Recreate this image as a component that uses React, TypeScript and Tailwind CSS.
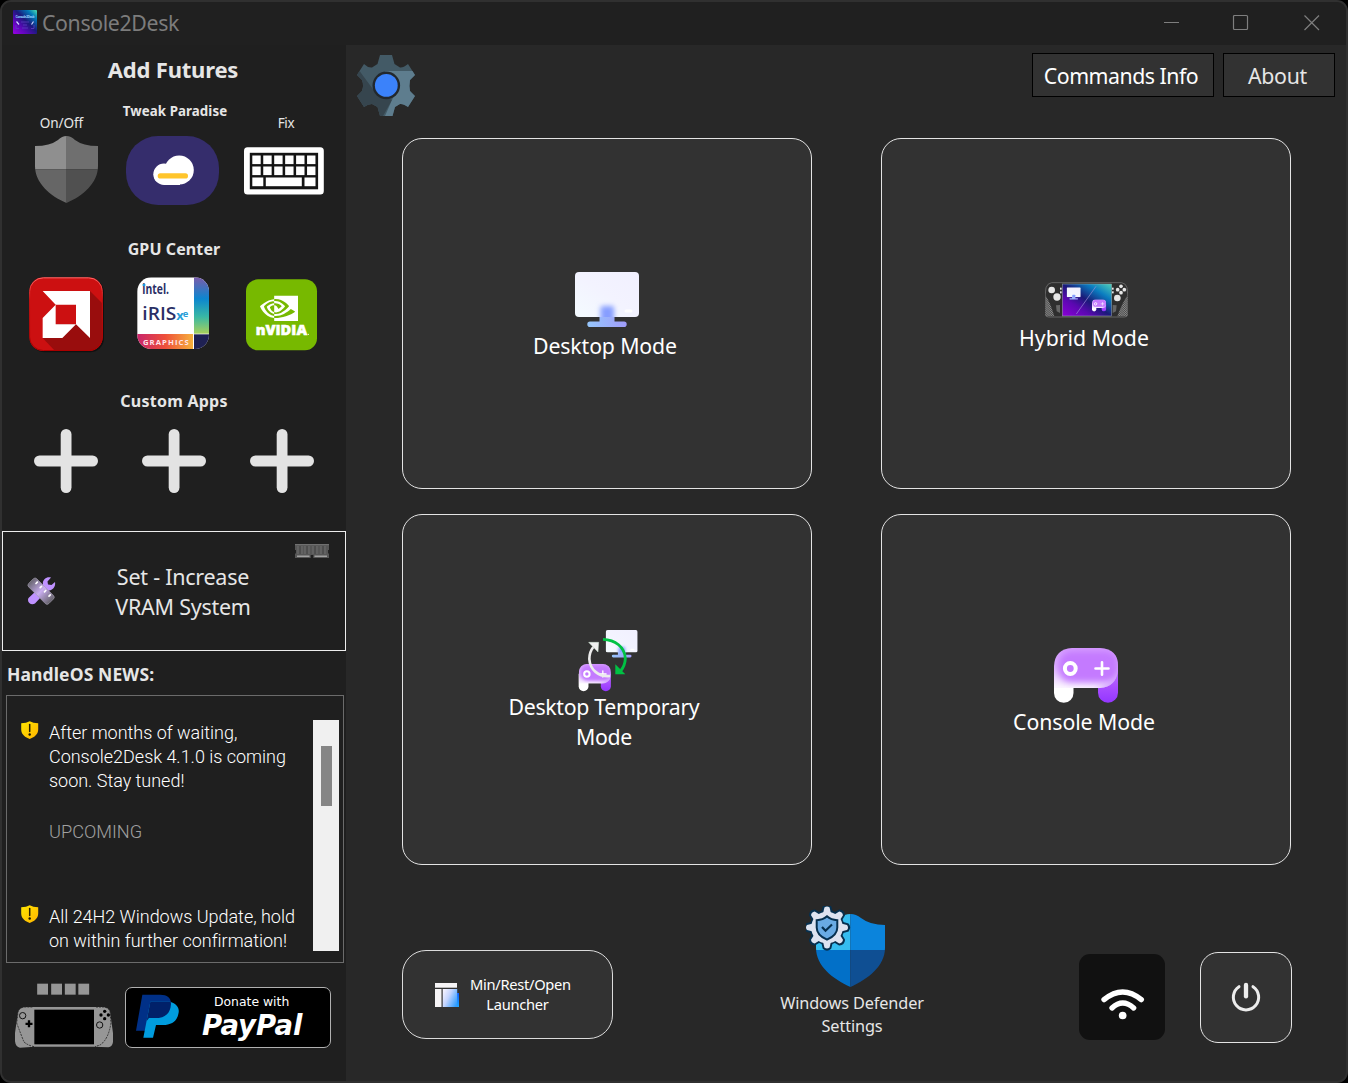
import React from "react";
import { SiNvidia } from "react-icons/si";

const FONT = "font-['Noto_Sans','Liberation_Sans',sans-serif]";

function AppLogo() {
  return (
    <svg width="24" height="24" viewBox="0 0 24 24">
      <defs>
        <linearGradient id="logoG" x1="0" y1="1" x2="1" y2="0">
          <stop offset="0" stopColor="#9a00e6" />
          <stop offset="0.3" stopColor="#5a08b8" />
          <stop offset="0.55" stopColor="#1b1a7c" />
          <stop offset="0.8" stopColor="#0078b8" />
          <stop offset="1" stopColor="#4fe0b0" />
        </linearGradient>
      </defs>
      <rect width="24" height="24" rx="1" fill="url(#logoG)" />
      <text x="2.5" y="7.6" fontSize="3.4" fontWeight="700" fill="#8fd0ff" textLength="19" fontFamily="Noto Sans">Console2Desk</text>
      <path d="M3.500 11.500l2.500 3M18.500 14.500l2-3" stroke="#cfd3ff" strokeWidth="1.200" />
      <path d="M3 15v3.5h3M21 15v3.5h-3M8 12h8M10 15h4M9 18h6" stroke="#5a3fc0" strokeWidth="0.8" fill="none" />
    </svg>
  );
}

function Gear() {
  return (
    <svg width="58" height="61" viewBox="0 0 58 61">
      <defs>
        <clipPath id="gearC">
          <path d="M23 0H35L37.5 9L43 12.5Q46 13 51 9L58 20L53 25Q52 30.500 53 36L58 41L51 52Q46 48.500 43 49L38 52L35.500 61H23L20.500 52L15 49Q11 49 7 52L0 41L5 36Q7 30.500 5 25L0 20L7 9Q11 13 15 12.500L20.500 9Z" />
        </clipPath>
      </defs>
      <g clipPath="url(#gearC)">
        <rect width="58" height="61" fill="#435a66" />
        <path d="M0 12L4 18L18 37L35 45L26 61H0Z" fill="#36454e" />
        <path d="M28 16H58V61H28L39 36Z" fill="#5e7d8e" />
      </g>
      <circle cx="29.300" cy="30.400" r="13.800" fill="#22282d" />
      <circle cx="29.300" cy="30.400" r="11.400" fill="#3b82fa" />
    </svg>
  );
}

function GreyShield() {
  return (
    <svg width="63" height="67" viewBox="0 0 63 67">
      <defs>
        <clipPath id="gs">
          <path d="M31.500 0Q36 0 40 4Q48 10 63 10V30C63 47 48 60 31.500 67C15 60 0 47 0 30V10Q15 10 23 4Q27 0 31.500 0Z" />
        </clipPath>
      </defs>
      <g clipPath="url(#gs)">
        <rect width="31" height="33.300" fill="#8f8f8f" />
        <rect x="31" width="32" height="33.300" fill="#6f6f6f" />
        <rect y="33.300" width="31" height="34" fill="#666" />
        <rect x="31" y="33.300" width="32" height="34" fill="#505050" />
      </g>
    </svg>
  );
}

function CloudPill() {
  return (
    <svg width="93" height="69" viewBox="0 0 93 69">
      <rect width="93" height="69" rx="32" fill="#352d6c" />
      <circle cx="53.200" cy="34" r="14.600" fill="#fff" />
      <circle cx="38" cy="38.300" r="10.700" fill="#fff" />
      <rect x="38" y="33" width="16" height="16" fill="#fff" />
      <rect x="31.700" y="37.300" width="30.300" height="5.200" rx="2.600" fill="#ffc52c" />
    </svg>
  );
}

function KeyboardIcon() {
  return (
    <svg width="81" height="48" viewBox="0 0 81 48">
      <rect x="0" y="0.300" width="79.800" height="47.200" rx="3.500" fill="#fff" />
      <rect x="5.800" y="5.800" width="68.300" height="36.500" fill="#141414" />
      {[8.5, 19.5].map((y) =>
        [0, 1, 2, 3, 4, 5].map((i) => (
          <rect key={`${y}-${i}`} x={8.3 + i * 10.95} y={y} width="8.400" height="8.600" fill="#fff" />
        ))
      )}
      <rect x="8.300" y="30.500" width="11" height="8.700" fill="#fff" />
      <rect x="21.800" y="30.500" width="36" height="8.700" fill="#fff" />
      <rect x="60.500" y="30.500" width="11" height="8.700" fill="#fff" />
    </svg>
  );
}

function AmdIcon() {
  return (
    <svg width="76" height="76" viewBox="87 142 228 228">
      <defs>
        <clipPath id="amdC"><rect x="88" y="143" width="220" height="221" rx="42" /></clipPath>
        <linearGradient id="amdG" x1="0" y1="0" x2="0" y2="1">
          <stop offset="0" stopColor="#ff6a6a" />
          <stop offset="0.300" stopColor="#cc1010" />
          <stop offset="1" stopColor="#a00" />
        </linearGradient>
      </defs>
      <rect x="92" y="147" width="220" height="221" rx="42" fill="#111" />
      <g clipPath="url(#amdC)">
        <rect x="88" y="143" width="220" height="221" fill="#cc1011" />
        <path d="M270 184L310 224V366H167L128 325L228 225Z" fill="#990d0d" />
        <path d="M167 225H228V284H167Z" fill="#cc1011" />
      </g>
      <rect x="89" y="144.500" width="218" height="218" rx="41" fill="none" stroke="url(#amdG)" strokeWidth="3" />
      <path d="M128 184H270V325L228 284V225H167Z" fill="#fff" />
      <path d="M167 225V284H228L187 325H128V265Z" fill="#fff" />
    </svg>
  );
}

function IntelIcon() {
  return (
    <svg width="72" height="72" viewBox="412 140 216 216">
      <defs>
        <clipPath id="inC"><rect x="413" y="141" width="215" height="215" rx="42" /></clipPath>
        <linearGradient id="inS" x1="0" y1="0" x2="0" y2="1">
          <stop offset="0" stopColor="#7a5cab" />
          <stop offset="0.380" stopColor="#0c86cf" />
          <stop offset="0.700" stopColor="#39b8a4" />
          <stop offset="1" stopColor="#a8d05a" />
        </linearGradient>
        <linearGradient id="inB">
          <stop offset="0" stopColor="#c8256c" />
          <stop offset="0.500" stopColor="#ee4f3a" />
          <stop offset="1" stopColor="#f6b03c" />
        </linearGradient>
      </defs>
      <g clipPath="url(#inC)">
        <rect x="412" y="141" width="216" height="216" fill="#fff" />
        <rect x="583" y="141" width="46" height="169" fill="url(#inS)" />
        <rect x="412" y="311" width="168" height="47" fill="url(#inB)" />
        <rect x="583" y="312" width="46" height="46" fill="#1f2153" />
      </g>
      <g fontFamily="Open Sans, Noto Sans, sans-serif" fill="#2b2f66">
        <text x="428" y="191" fontSize="41" fontWeight="700" textLength="80" lengthAdjust="spacingAndGlyphs">intel.</text>
        <text x="428" y="269" fontSize="55" fontWeight="600" textLength="102" lengthAdjust="spacingAndGlyphs">iRIS</text>
        <text x="530" y="270" fontSize="39" fontWeight="700" fill="#2a9fd8">x</text>
        <text x="549" y="261" fontSize="28" fontWeight="700" fill="#2a9fd8">e</text>
        <text x="430" y="345" fontSize="23" fontWeight="700" fill="#ffe3ea" textLength="137">GRAPHICS</text>
      </g>
      <rect x="429" y="161" width="8" height="6" fill="#1a9be0" />
    </svg>
  );
}

function NvidiaIcon() {
  return (
    <svg width="72" height="72" viewBox="738 148 216 216">
      <rect x="738" y="149" width="213" height="213" rx="36" fill="#77b900" />
      <SiNvidia x="780" y="179" width="114" height="114" size={114} color="#fff" />
      <text x="767" y="316" fontFamily="Open Sans, Noto Sans, sans-serif" fontWeight="800" fontSize="41" fill="#fff" stroke="#fff" strokeWidth="1.500" textLength="154" lengthAdjust="spacingAndGlyphs">nVIDIA</text>
      <circle cx="925" cy="314" r="2" fill="#fff" />
    </svg>
  );
}

function Plus() {
  return (
    <svg width="64" height="64" viewBox="0 0 64 64">
      <rect x="26.700" width="10.800" height="64" rx="5.400" fill="#e3e3e3" />
      <rect y="26.500" width="64" height="11" rx="5.500" fill="#e3e3e3" />
    </svg>
  );
}

function ToolsIcon() {
  return (
    <svg width="29" height="30" viewBox="0 0 29 30">
      <defs>
        <linearGradient id="tlG">
          <stop offset="0" stopColor="#6a6772" />
          <stop offset="0.500" stopColor="#c9aef0" />
          <stop offset="1" stopColor="#66636c" />
        </linearGradient>
      </defs>
      <path d="M1.500 22L16 8.500C15 4 19.500 0 24 1.500L20.500 5.500L21 8.500L24.500 9L28 6C29 11 25 15.500 20 14.500L8 27.600C4 30 -0.500 26 1.500 22Z" fill="#bf92ff" />
      <rect x="0" y="9.500" width="28.500" height="11.500" rx="2.500" transform="rotate(45 14.250 15)" fill="url(#tlG)" stroke="#a59fb0" strokeWidth="0.600" />
      <path d="M9 7.500l1.300-1.300M13.200 11.700l1.300-1.300M17.500 15.800l1.300-1.300M22 20.200l1.300-1.300" stroke="#fff" strokeWidth="1.700" strokeLinecap="round" />
    </svg>
  );
}

function RamIcon() {
  return (
    <svg width="34" height="14" viewBox="0 0 34 14">
      <rect width="34" height="14" fill="#565656" />
      <rect width="34" height="1.200" fill="#707070" />
      <path d="M3 2v8M7 2v8M10 2v8M14 2v8M18 2v8M22 2v8M26 2v8M30 2v8" stroke="#757575" strokeWidth="0.800" />
      <path d="M5 2v8M12 2v8M20 2v8M28 2v8" stroke="#454545" strokeWidth="0.800" />
      <path d="M2 12.200h12.500M19.500 12.200h12.500" stroke="#a0a0a0" strokeWidth="1.600" />
      <rect x="15.700" y="11" width="2.600" height="3" fill="#1f1f1f" />
      <rect y="6" width="1" height="3.500" fill="#222" />
      <rect x="33" y="6" width="1" height="3.500" fill="#222" />
    </svg>
  );
}

function WarnShield() {
  return (
    <svg width="18" height="18" viewBox="0 0 18 18">
      <defs>
        <linearGradient id="wsG" x1="0" y1="0" x2="1" y2="1">
          <stop offset="0" stopColor="#ffe600" />
          <stop offset="1" stopColor="#ffb300" />
        </linearGradient>
      </defs>
      <path d="M8.700 0.300Q12 2.300 17.200 2.300V8.500C17.200 13.500 13 16.500 8.700 17.900C4.500 16.500 0.200 13.500 0.200 8.500V2.300Q5.500 2.300 8.700 0.300Z" fill="url(#wsG)" />
      <path d="M8.700 3.500v7" stroke="#2a2000" strokeWidth="1.500" strokeLinecap="round" />
      <circle cx="8.700" cy="13.500" r="1.200" fill="#1a1400" />
    </svg>
  );
}

function HandheldGrey() {
  return (
    <svg width="98" height="66" viewBox="45 55 294 198">
      {[111.5, 153.5, 194.5, 235].map((x) => (
        <rect key={x} x={x} y="57" width="32.500" height="33" fill="#969696" />
      ))}
      <path d="M75 127H310Q325 128 330 140L339 205V232Q337 247 325 248L282 246H104L60 249Q47 247 45 230V205L54 142Q58 128 75 127Z" fill="#969696" />
      <rect x="103" y="135" width="179" height="104" fill="#000" />
      <path d="M97 127H75Q58 128 54 142L50 175Q65 215 72 232Q85 243 103 246M288 127H310Q325 128 330 140L333 175Q325 225 300 241L285 246" fill="none" stroke="#222" strokeWidth="2.500" strokeDasharray="6 3" />
      <circle cx="68" cy="153" r="9.500" fill="none" stroke="#111" strokeWidth="3" />
      <circle cx="299" cy="181" r="9.500" fill="none" stroke="#111" strokeWidth="3" />
      <path d="M87 167v21M76.500 177.500h21" stroke="#000" strokeWidth="7" />
      <g fill="#000">
        <circle cx="314" cy="140" r="5" /><circle cx="314" cy="162" r="5" /><circle cx="303" cy="151" r="5" /><circle cx="325" cy="151" r="5" />
      </g>
    </svg>
  );
}

function PayPalMark() {
  return (
    <svg width="43" height="44" viewBox="409 88 129 132">
      <path d="M428 90H482C503 90 515 101 514 118C512 147 496 160 470 160H448L440 198H409Z" fill="#003087" />
      <path d="M452 111H511C532 117 541 131 536 148C531 172 513 181 490 181H469L460 219H431Z" fill="#009cde" />
      <path d="M452 111H513Q514 114 514 118C512 147 496 160 470 160H448L441 169Z" fill="#012169" />
    </svg>
  );
}

function MonitorShape({ id }: { id: string }) {
  return (
    <g>
      <defs>
        <linearGradient id={`${id}a`} x1="0" y1="1" x2="1" y2="0">
          <stop offset="0" stopColor="#f4fbff" />
          <stop offset="0.500" stopColor="#f3f3ff" />
          <stop offset="1" stopColor="#f1f0ff" />
        </linearGradient>
        <linearGradient id={`${id}b`}>
          <stop offset="0" stopColor="#96c6fb" />
          <stop offset="1" stopColor="#a09cfa" />
        </linearGradient>
        <filter id={`${id}c`} x="-60%" y="-60%" width="220%" height="220%">
          <feGaussianBlur stdDeviation="2.800" />
        </filter>
        <clipPath id={`${id}d`}><rect width="64" height="45" rx="4" /></clipPath>
      </defs>
      <path d="M24.500 43H39.500V49.500H49Q51.700 49.500 51.700 52.200Q51.700 55 49 55H15Q12.300 55 12.300 52.200Q12.300 49.500 15 49.500H24.500Z" fill={`url(#${id}b)`} />
      <g clipPath={`url(#${id}d)`}>
        <rect width="64" height="45" fill={`url(#${id}a)`} />
        <rect x="25.500" y="34" width="13.500" height="20" rx="2" fill="#869eff" filter={`url(#${id}c)`} />
      </g>
      <rect x="49.500" y="37.500" width="8" height="3" rx="1.500" fill="#fff" />
    </g>
  );
}

function PadShape({ id }: { id: string }) {
  return (
    <g>
      <defs>
        <linearGradient id={`${id}a`} x1="0" y1="0" x2="0" y2="1">
          <stop offset="0" stopColor="#bb7bff" />
          <stop offset="0.500" stopColor="#ac50ff" />
          <stop offset="1" stopColor="#9336ff" />
        </linearGradient>
        <linearGradient id={`${id}b`} x1="0.400" y1="0" x2="0.250" y2="1">
          <stop offset="0" stopColor="#d69cff" />
          <stop offset="0.500" stopColor="#dcb0ff" />
          <stop offset="1" stopColor="#fbf5ff" />
        </linearGradient>
        <filter id={`${id}c`} x="-30%" y="-30%" width="160%" height="160%">
          <feGaussianBlur stdDeviation="3" />
        </filter>
        <clipPath id={`${id}d`}>
          <path d="M18 0H46Q64 1 64 18V22Q62 39 46 40H0V18Q1 1 18 0Z" />
        </clipPath>
      </defs>
      <path d="M0 20H19.500V45A9.700 9.700 0 0 1 0 45Z" fill="#fff" />
      <path d="M44 20H64V44.700A10 10 0 0 1 44 44.700Z" fill={`url(#${id}a)`} />
      <g clipPath={`url(#${id}d)`}>
        <rect width="64" height="40" fill={`url(#${id}b)`} />
        <rect x="4.500" y="3" width="60" height="31" rx="13" fill="#c47aff" filter={`url(#${id}c)`} />
        <path d="M44 42H66V24Q62 36 44 40Z" fill="#c88cff" filter={`url(#${id}c)`} />
      </g>
      <circle cx="16.300" cy="20.500" r="5.400" fill="none" stroke="#fff" strokeWidth="4" />
      <path d="M48 14.300V26.700M41.500 20.500H54.500" stroke="#fff" strokeWidth="2.600" strokeLinecap="round" />
    </g>
  );
}

function HandheldColor() {
  return (
    <svg width="83" height="36" viewBox="135 65 249 108">
      <defs>
        <linearGradient id="hhG" x1="0" y1="1" x2="1" y2="0">
          <stop offset="0" stopColor="#8c00d8" />
          <stop offset="0.300" stopColor="#5a08b0" />
          <stop offset="0.500" stopColor="#1a1a78" />
          <stop offset="0.750" stopColor="#0a7cc0" />
          <stop offset="1" stopColor="#4fd0b8" />
        </linearGradient>
        <pattern id="hhP" width="4" height="4" patternUnits="userSpaceOnUse" patternTransform="rotate(40)">
          <rect width="4" height="4" fill="#4a4a4a" />
          <rect width="2" height="4" fill="#8a8a8a" />
        </pattern>
      </defs>
      <path d="M155 67H365Q378 69 381 82L384 110V160Q383 170 374 170H145Q136 170 135 160V110L138 82Q142 69 155 67Z" fill="#2e2e2e" stroke="#6f6f6f" strokeWidth="2.500" />
      <path d="M136 105Q150 125 163 168H146Q137 168 136 160ZM383 105Q368 125 352 168H373Q383 168 383 160Z" fill="url(#hhP)" />
      <rect x="187" y="71" width="148" height="96" fill="url(#hhG)" stroke="#9aa" strokeWidth="1.500" />
      <path d="M288 78L229 161" stroke="#9b8fd8" strokeWidth="2" />
      <g fill="#e6e6e6">
        <circle cx="155" cy="89" r="10" /><circle cx="171" cy="110" r="11" /><circle cx="352" cy="113" r="10" />
        <circle cx="363" cy="78" r="5.500" /><circle cx="363" cy="97" r="5.500" /><circle cx="353" cy="88" r="5.500" /><circle cx="373" cy="88" r="5.500" />
        <rect x="180" y="82" width="5" height="6" /><rect x="180" y="93" width="5" height="6" />
        <rect x="336" y="82" width="5" height="6" /><rect x="336" y="93" width="5" height="6" />
      </g>
      <path d="M168 135L180 134V158L170 153ZM350 135L338 134V158L348 153Z" fill="#666" />
      <g transform="translate(200 81) scale(0.660)"><MonitorShape id="hm" /></g>
      <g transform="translate(276 117) scale(0.660)"><PadShape id="hp" /></g>
    </svg>
  );
}

function SwapIcon() {
  return (
    <svg width="61" height="63" viewBox="264 58 183 189">
      <g transform="translate(347 61) scale(1.500)"><MonitorShape id="sm" /></g>
      <g transform="translate(266 162) scale(1.510)"><PadShape id="sp" /></g>
      <path d="M360 199C325 202 300 180 298 148Q298 127 310 112" fill="none" stroke="#ececec" strokeWidth="8" />
      <path d="M296 98L326 98L324 127Z" fill="#f0f0f0" stroke="#cfe6d4" strokeWidth="1.500" />
      <path d="M339 89C375 90 405 112 406 147Q405 168 392 184" fill="none" stroke="#00c244" strokeWidth="8.500" />
      <path d="M376 164L376 194L406 194Z" fill="#00c244" />
    </svg>
  );
}

function LauncherIcon() {
  return (
    <svg width="24" height="24" viewBox="0 0 24 24">
      <defs>
        <linearGradient id="laG" x1="0" y1="0.200" x2="1" y2="0.800">
          <stop offset="0" stopColor="#f3f1ff" />
          <stop offset="0.400" stopColor="#c5d5ff" />
          <stop offset="1" stopColor="#2f9dff" />
        </linearGradient>
        <linearGradient id="laH" x1="0" y1="0" x2="0" y2="1">
          <stop offset="0" stopColor="#0a5cff" />
          <stop offset="1" stopColor="#1fa8ff" />
        </linearGradient>
      </defs>
      <rect x="14" y="10" width="10" height="14" fill="url(#laH)" />
      <rect width="22" height="4.700" fill="#f6f4f6" />
      <rect y="6" width="6.500" height="18" fill="#f6f4f6" />
      <rect x="7.700" y="6" width="14.500" height="18" fill="url(#laG)" />
    </svg>
  );
}

function DefenderIcon() {
  const teeth = [0, 45, 90, 135, 180, 225, 270, 315];
  return (
    <svg width="80" height="81" viewBox="0 0 80 81">
      <defs>
        <clipPath id="dfC">
          <path d="M44.500 8Q50 8 55 12Q64 19 79 19V42C79 60 62 73 44.500 81C27 73 10 60 10 42V19Q25 19 34 12Q38 8 44.500 8Z" />
        </clipPath>
      </defs>
      <g clipPath="url(#dfC)">
        <rect width="44.300" height="44" fill="#35bdf0" />
        <rect x="44.300" width="36" height="44" fill="#0b84dc" />
        <rect y="44" width="44.300" height="38" fill="#0270c8" />
        <rect x="44.300" y="44" width="36" height="38" fill="#0f4f93" />
      </g>
      <g transform="translate(21 21.500)">
        {teeth.map((a) => (
          <path key={a} transform={`rotate(${a})`} d="M-4.600 -14L-3 -20.500Q0 -23 3 -20.500L4.600 -14Z" fill="#dde3f0" stroke="#06304f" strokeWidth="2.800" strokeLinejoin="round" />
        ))}
        <circle r="16.600" fill="#dde3f0" stroke="#06304f" strokeWidth="1.600" />
        {teeth.map((a) => (
          <path key={a} transform={`rotate(${a})`} d="M-4.200 -13L-2.600 -20Q0 -22 2.600 -20L4.200 -13Z" fill="#dde3f0" />
        ))}
        <path d="M0 -11.200Q4 -7.500 10.300 -7.300V0C10.300 6 5 10 0 12.200C-5 10 -10.300 6 -10.300 0V-7.300Q-4 -7.500 0 -11.200Z" fill="#69abe4" stroke="#06304f" strokeWidth="2" />
        <path d="M-5 -0.500L-1.500 3.200L5 -3" fill="none" stroke="#06304f" strokeWidth="2.200" />
      </g>
    </svg>
  );
}

function WifiIcon() {
  return (
    <svg width="44" height="32" viewBox="122 174 132 96">
      <path d="M131 209Q187 163 243 209" fill="none" stroke="#fff" strokeWidth="16" strokeLinecap="round" />
      <path d="M155 234Q187 204 220 234" fill="none" stroke="#fff" strokeWidth="16" strokeLinecap="round" />
      <circle cx="187" cy="256.500" r="11.500" fill="#fff" />
    </svg>
  );
}

function PowerIcon() {
  return (
    <svg width="30" height="30" viewBox="513 156 90 90">
      <path d="M537 170A38 38 0 1 0 579 170" fill="none" stroke="#ececec" strokeWidth="9" strokeLinecap="round" />
      <path d="M558 165V199" stroke="#ececec" strokeWidth="13" strokeLinecap="round" />
    </svg>
  );
}

function IconRow({ items, className }: { items: React.ReactNode[]; className: string }) {
  return (
    <div className={`grid grid-cols-3 w-[324px] ml-[10px] ${className}`}>
      {items.map((it, i) => (
        <button key={i} className="flex items-start justify-center">{it}</button>
      ))}
    </div>
  );
}

function ModeCard({ icon, pad, children }: { icon: React.ReactNode; pad: string; children: React.ReactNode }) {
  return (
    <button className={`flex flex-col items-center justify-start rounded-[20px] border border-[#e4e4e4] bg-[#323232] text-white text-[21.300px] leading-[30px] ${pad}`}>
      {icon}
      {children}
    </button>
  );
}

function NewsItem({ children }: { children: React.ReactNode }) {
  return (
    <div className="flex">
      <div className="w-[28px] shrink-0"><WarnShield /></div>
      <p className="font-['Roboto',sans-serif] font-light text-[18px] leading-6 tracking-[-0.020px] text-white whitespace-nowrap">{children}</p>
    </div>
  );
}

function Sidebar() {
  return (
    <aside className="w-[344px] shrink-0 bg-[#1f1f1f] flex flex-col text-[#e6e6e6]">
      <h1 className="h-[30px] mt-[9px] text-center font-bold text-[22px] leading-[30px] tracking-[-0.200px] -ml-[2px]">Add Futures</h1>
      <div className="grid grid-cols-3 w-[324px] ml-[10px] mt-[17px] h-[35px] text-center whitespace-nowrap">
        <span className="mt-[12px] text-[13.600px] leading-5 tracking-[-0.120px] -ml-[9px]">On/Off</span>
        <span className="text-[13.300px] leading-5 font-bold tracking-[0.080px] ml-[2px]">Tweak Paradise</span>
        <span className="mt-[12px] text-[13.500px] leading-5 tracking-[-0.300px] ml-[8px]">Fix</span>
      </div>
      <IconRow className="h-[69px]" items={[<GreyShield />, <span className="-ml-[3px]"><CloudPill /></span>, <span className="mt-[11px] ml-[4px]"><KeyboardIcon /></span>]} />
      <h2 className="mt-[32px] h-6 text-center font-bold text-base leading-6 tracking-[0.100px]">GPU Center</h2>
      <IconRow className="mt-[16px] h-[76px]" items={[<span className="ml-[2px]"><AmdIcon /></span>, <span className="-ml-[2px]"><IntelIcon /></span>, <span className="mt-[2px]"><NvidiaIcon /></span>]} />
      <h2 className="mt-[36px] h-6 text-center font-bold text-base leading-6 tracking-[0.250px]">Custom Apps</h2>
      <IconRow className="mt-[16px] h-[64px]" items={[<Plus />, <Plus />, <Plus />]} />
      <button className="relative mt-[38px] h-[120px] shrink-0 border border-[#ededed] flex items-center text-[21.500px] leading-[30px]">
        <span className="ml-[24px]"><ToolsIcon /></span>
        <span className="flex-1 pr-[35px] mt-[2px] text-center tracking-[-0.250px]">Set - Increase<br />VRAM System</span>
        <span className="absolute right-[16px] top-[12px]"><RamIcon /></span>
      </button>
      <h2 className="mt-[11px] h-6 pl-[5px] font-bold text-[17.500px] leading-6 tracking-[0.120px]">HandleOS NEWS:</h2>
      <section className="mt-[9px] ml-[4px] mr-[2px] h-[268px] border border-[#6b6b6b] pt-[24px] pl-[14px] pr-[4px] flex justify-between">
        <div className="pt-[1px]">
          <NewsItem>After months of waiting,<br />Console2Desk 4.1.0 is coming<br />soon. Stay tuned!</NewsItem>
          <p className="ml-[28px] mt-[27px] mb-[61px] font-['Roboto',sans-serif] font-light text-[18.200px] leading-6 text-[#a0a0a0]">UPCOMING</p>
          <NewsItem>All 24H2 Windows Update, hold<br />on within further confirmation!</NewsItem>
        </div>
        <div className="w-[26px] h-[231px] bg-[#f0f0f0] pt-[26px] pl-[8px]">
          <div className="w-[11px] h-[60px] bg-[#858585]" />
        </div>
      </section>
      <footer className="flex mt-[20px] ml-[13px]">
        <HandheldGrey />
        <button className="ml-[12px] mt-[4px] w-[206px] h-[61px] rounded-[7px] border border-[#b0b0b0] bg-black flex items-start text-white font-['DejaVu_Sans',sans-serif]">
          <span className="ml-[10px] mt-[6px]"><PayPalMark /></span>
          <span className="flex-1 pr-[4px] pl-[26px] flex flex-col items-start">
            <span className="ml-[9px] mt-[6px] text-[12.400px] leading-[16px] whitespace-nowrap">Donate with</span>
            <span className="-ml-[3px] mt-[1px] text-[27.500px] leading-[28px] font-bold italic">PayPal</span>
          </span>
        </button>
      </footer>
    </aside>
  );
}

export default function App() {
  return (
    <div className={`w-[1348px] h-[1083px] bg-black overflow-hidden ${FONT}`}>
      <div className="w-full h-full rounded-[11px] border-2 border-[#303030] overflow-hidden flex flex-col bg-[#282828]">
        <header className="h-[43px] shrink-0 bg-[#202020] flex items-start text-[#7c7c7c]">
          <span className="ml-[11px] mt-[8px]"><AppLogo /></span>
          <span className="ml-[5px] mt-[6px] text-[21.300px] leading-[30px] tracking-[-0.370px]">Console2Desk</span>
          <svg className="ml-auto mr-[24px] mt-[12px]" width="158" height="17" viewBox="0 0 158 17" fill="none" stroke="#7e7e7e">
            <path d="M0 8.500H15" />
            <rect x="69.500" y="1.500" width="14" height="14" rx="1" strokeWidth="1.200" />
            <path d="M140.500 1.500L155 16M155 1.500L140.500 16" strokeWidth="1.200" />
          </svg>
        </header>
        <div className="flex flex-1 min-h-0">
          <Sidebar />
          <main className="flex-1 flex flex-col">
            <div className="flex items-start h-[93px] pl-[11px] pr-[11px]">
              <button className="mt-[10px]"><Gear /></button>
              <button className="ml-auto mt-[8px] w-[182px] h-[44px] border border-black bg-[#323232] text-white text-[21.300px] leading-[30px] pt-[2px] pr-[4px] tracking-[-0.480px] whitespace-nowrap">Commands Info</button>
              <button className="ml-[9px] mt-[8px] w-[112px] h-[44px] border border-black bg-[#323232] text-[#e6e6e6] text-[21.300px] leading-[30px] pt-[2px] pr-[3px] tracking-[-0.300px]">About</button>
            </div>
            <div className="ml-[56px] grid grid-cols-[410px_410px] grid-rows-[351px_351px] gap-x-[69px] gap-y-[25px]">
              <ModeCard pad="pt-[133px]" icon={<svg width="64" height="56" viewBox="0 0 64 56"><MonitorShape id="mm" /></svg>}>
                <span className="mt-[3px] mr-[4px] tracking-[-0.150px]">Desktop Mode</span>
              </ModeCard>
              <ModeCard pad="pt-[143px]" icon={<HandheldColor />}>
                <span className="mt-[5px] mr-[4px]">Hybrid Mode</span>
              </ModeCard>
              <ModeCard pad="pt-[114px]" icon={<span className="ml-[2px]"><SwapIcon /></span>}>
                <span className="mr-[6px] tracking-[-0.340px]">Desktop Temporary<br />Mode</span>
              </ModeCard>
              <ModeCard pad="pt-[133px]" icon={<svg width="64" height="55" viewBox="0 0 64 55"><PadShape id="cp" /></svg>}>
                <span className="mt-[4px] mr-[4px] tracking-[-0.080px]">Console Mode</span>
              </ModeCard>
            </div>
            <div className="flex items-start ml-[56px] mt-[41px]">
              <button className="mt-[44px] w-[211px] h-[89px] rounded-[24px] border border-[#dcdcdc] bg-[#323232] flex items-center pl-[32px] text-white">
                <LauncherIcon />
                <span className="ml-[11px] -mt-[2px] flex flex-col items-center text-[14.700px] leading-5 tracking-[-0.300px] whitespace-nowrap"><span>Min/Rest/Open</span><span className="mr-[6px]">Launcher</span></span>
              </button>
              <button className="ml-[167px] w-[144px] flex flex-col items-center text-[#e6e6e6]">
                <span className="-ml-[12px]"><DefenderIcon /></span>
                <span className="mt-[5px] text-[16.300px] leading-[23px] tracking-[-0.120px] whitespace-nowrap">Windows Defender<br />Settings</span>
              </button>
              <button className="ml-[155px] mt-[48px] w-[86px] h-[86px] rounded-[11px] bg-[#111] flex justify-center pt-[34px] pl-[2px]"><WifiIcon /></button>
              <button className="ml-[35px] mt-[46px] w-[92px] h-[91px] rounded-[18px] border border-[#e4e4e4] bg-[#323232] flex justify-center pt-[29px]"><PowerIcon /></button>
            </div>
          </main>
        </div>
      </div>
    </div>
  );
}
